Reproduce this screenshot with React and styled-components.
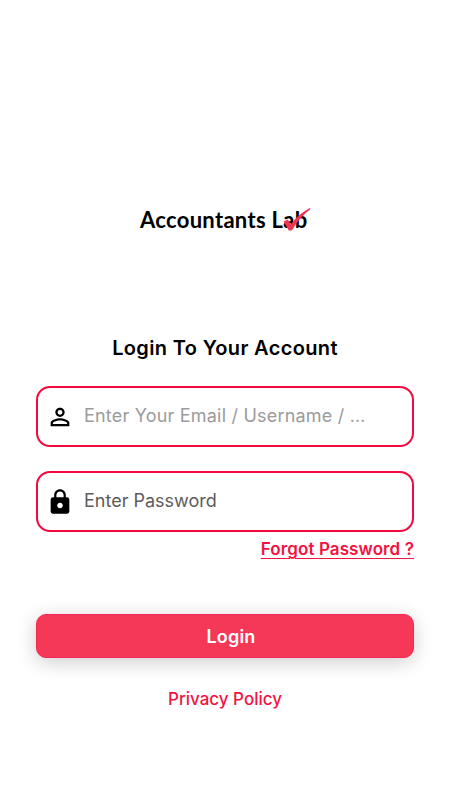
import React from "react";
import styled, { createGlobalStyle } from "styled-components";

export default function App() {
  return (
    <>
      <GlobalStyle />
      <Screen>
        <Brand>
          <BrandName>Accountants Lab</BrandName>
          <Tick viewBox="0 0 28 24">
            <path d="M0.6 13.6 4.8 11.6 7.8 16.4C12 10.4 19 4.2 26.8 0L27.6 0.9C19.8 7 13.2 14.5 8.8 22.4H5.8Z" />
          </Tick>
        </Brand>
        <Title>Login To Your Account</Title>
        <Form onSubmit={(e) => e.preventDefault()}>
          <Field>
            <Icon viewBox="0 0 24 24">
              <path d="M12 5.9a2.1 2.1 0 1 1 0 4.2 2.1 2.1 0 0 1 0-4.2m0 9c2.97 0 6.1 1.46 6.1 2.1v1.1H5.9V17c0-.64 3.13-2.1 6.1-2.1M12 4C9.79 4 8 5.79 8 8s1.79 4 4 4 4-1.79 4-4-1.79-4-4-4m0 9c-2.67 0-8 1.34-8 4v3h16v-3c0-2.66-5.33-4-8-4" />
            </Icon>
            <Input type="text" placeholder="Enter Your Email / Username / …" $hint="#9b9b9b" $spacing="0.2px" />
          </Field>
          <Field>
            <Icon viewBox="0 0 24 24">
              <path d="M18 8h-1V6c0-2.76-2.24-5-5-5S7 3.24 7 6v2H6c-1.1 0-2 .9-2 2v10c0 1.1.9 2 2 2h12c1.1 0 2-.9 2-2V10c0-1.1-.9-2-2-2m-6 9.4c-1.3 0-2.4-1.1-2.4-2.4s1.1-2.4 2.4-2.4 2.4 1.1 2.4 2.4-1.1 2.4-2.4 2.4m3.1-9.4H8.9V6c0-1.71 1.39-3.1 3.1-3.1s3.1 1.39 3.1 3.1z" />
            </Icon>
            <Input type="password" placeholder="Enter Password" $hint="#5c5c5c" $spacing="0" />
          </Field>
          <Forgot href="#forgot">Forgot Password ?</Forgot>
          <Button type="submit">Login</Button>
        </Form>
        <Privacy href="#privacy">Privacy Policy</Privacy>
      </Screen>
    </>
  );
}

const GlobalStyle = createGlobalStyle`
  * {
    box-sizing: border-box;
  }
  body {
    margin: 0;
    background: #fff;
    font-family: Inter, "Liberation Sans", sans-serif;
  }
`;

const Screen = styled.main`
  display: flex;
  flex-direction: column;
  align-items: center;
  width: 450px;
  height: 800px;
  padding: 204px 36px 0;
  background: #fff;
`;

const Brand = styled.div`
  position: relative;
  display: flex;
  width: 172px;
  height: 32px;
  padding-left: 1px;
`;

const BrandName = styled.span`
  font-family: Lato, "Open Sans", sans-serif;
  font-size: 22px;
  font-weight: 700;
  line-height: 31px;
  letter-spacing: 0.3px;
  white-space: nowrap;
  color: #000;
`;

const Tick = styled.svg`
  position: absolute;
  top: 4px;
  right: 0;
  width: 28px;
  height: 24px;
  fill: #f43456;
`;

const Title = styled.h1`
  margin: 98px 0 0;
  font-size: 20px;
  font-weight: 600;
  line-height: 28px;
  letter-spacing: 0.35px;
  white-space: nowrap;
  color: #000;
`;

const Form = styled.form`
  display: flex;
  flex-direction: column;
  width: 100%;
  margin-top: 24px;
`;

const Field = styled.label`
  display: flex;
  align-items: center;
  height: 61px;
  margin-bottom: 24px;
  padding: 0 10px;
  border: 2px solid #f4083e;
  border-radius: 14px;
`;

const Icon = styled.svg`
  flex: none;
  width: 28px;
  height: 28px;
  margin-left: -2px;
  fill: #000;
`;

const Input = styled.input`
  flex: 1;
  min-width: 0;
  margin-left: 10px;
  padding: 0 0 2px;
  border: 0;
  outline: 0;
  background: transparent;
  font-family: inherit;
  font-size: 18px;
  letter-spacing: ${(props) => props.$spacing};

  &::placeholder {
    color: ${(props) => props.$hint};
    opacity: 1;
  }
`;

const Forgot = styled.a`
  align-self: flex-end;
  margin-top: -19px;
  font-size: 17px;
  font-weight: 600;
  line-height: 24px;
  letter-spacing: 0.1px;
  text-decoration: underline;
  text-decoration-thickness: 1px;
  text-underline-offset: 3px;
  white-space: nowrap;
  color: #f5123f;
`;

const Button = styled.button`
  height: 44px;
  margin-top: 53px;
  padding: 0 0 0 12px;
  border: 1px solid #f5284f;
  border-radius: 10px;
  background: #f53858;
  box-shadow: 0 4px 20px rgba(0, 0, 0, 0.2);
  font-family: inherit;
  font-size: 18px;
  font-weight: 600;
  letter-spacing: 0.2px;
  color: #fff;
`;

const Privacy = styled.a`
  margin-top: 29px;
  font-size: 17px;
  font-weight: 500;
  line-height: 24px;
  text-decoration: none;
  color: #f5123f;
`;
